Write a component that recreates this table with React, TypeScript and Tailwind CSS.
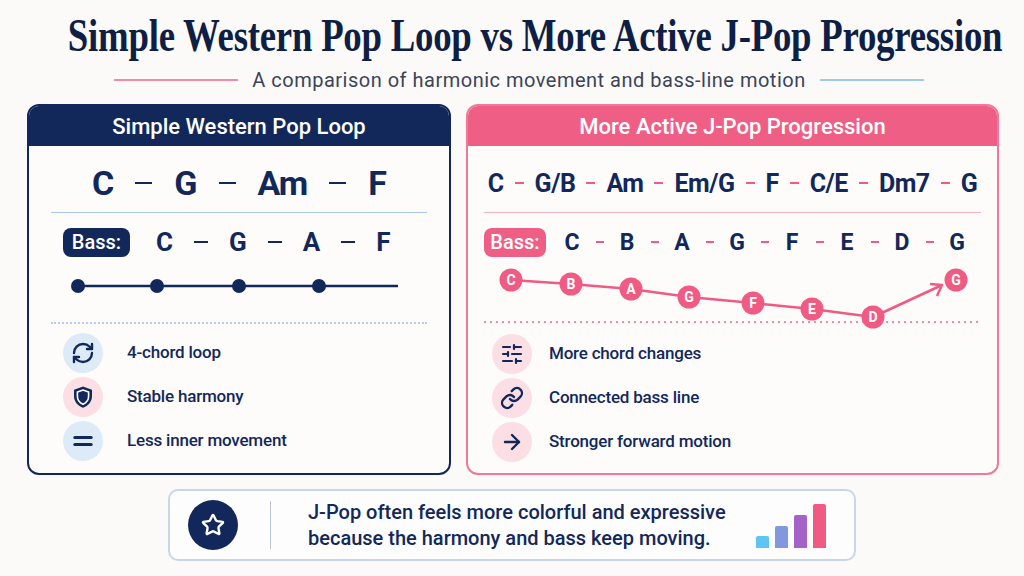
import React from "react";
import { RefreshCw, Equal, SlidersHorizontal, Link, ArrowRight, Star } from "lucide-react";

const body = "font-['Roboto','Liberation_Sans',sans-serif]";

const ShieldIcon = () => (
  <svg width="22" height="24" viewBox="0 0 22 24">
    <path d="M11 1.5 L20 4.8 V11 C20 17 16 20.8 11 22.8 C6 20.8 2 17 2 11 V4.8 Z" fill="#13285a" />
    <path d="M11 5 L16.6 7.1 V11.3 C16.6 15.2 14.2 17.9 11 19.3 C7.8 17.9 5.4 15.2 5.4 11.3 V7.1 Z" fill="none" stroke="#ffffff" strokeWidth="1.6" />
  </svg>
);

const leftFeatures = [
  { icon: <RefreshCw className="w-6 h-6" strokeWidth={2.4} />, bg: "bg-[#dcebf7]", label: "4-chord loop" },
  { icon: <ShieldIcon />, bg: "bg-[#fbdfe4]", label: "Stable harmony" },
  { icon: <Equal className="w-7 h-7" strokeWidth={2.6} />, bg: "bg-[#dcebf7]", label: "Less inner movement" },
];

const rightFeatures = [
  { icon: <SlidersHorizontal className="w-6 h-6" strokeWidth={2.2} />, label: "More chord changes" },
  { icon: <Link className="w-6 h-6" strokeWidth={2.4} />, label: "Connected bass line" },
  { icon: <ArrowRight className="w-6 h-6" strokeWidth={2.4} />, label: "Stronger forward motion" },
];

const jChords = ["C", "G/B", "Am", "Em/G", "F", "C/E", "Dm7", "G"];
const jBass = ["C", "B", "A", "G", "F", "E", "D", "G"];

// bass-line nodes, coords inside the right panel chart
const nodes = [
  { n: "C", x: 43, y: 9 },
  { n: "B", x: 103, y: 13 },
  { n: "A", x: 163, y: 18 },
  { n: "G", x: 221, y: 26 },
  { n: "F", x: 285, y: 32 },
  { n: "E", x: 344, y: 38 },
  { n: "D", x: 405, y: 46 },
  { n: "G", x: 488, y: 9 },
];

const Dash: React.FC<{ pink?: boolean; w?: string }> = ({ pink, w = "w-[15px]" }) => (
  <span className={`${w} h-[2.5px] ${pink ? "bg-[#ef5b83]" : "bg-[#13285a]"} inline-block`} />
);

const App: React.FC = () => {
  return (
    <div className={`w-[1024px] h-[576px] bg-[#fbfaf8] flex flex-col items-center overflow-hidden text-[#13285a] ${body}`}>
      {/* title */}
      <h1 className="mt-[10px] h-[52px] flex items-center justify-center w-full pl-[46px]">
        <span className="inline-block scale-x-[0.8] font-['Liberation_Serif',serif] font-bold text-[46px] leading-none whitespace-nowrap text-[#0f1e44] tracking-[-0.3px]">
          Simple Western Pop Loop vs More Active J-Pop Progression
        </span>
      </h1>
      <div className="mt-[6px] flex items-center gap-[14px] h-[24px] pl-[14px]">
        <span className="w-[124px] h-[2px] bg-[#f28ca6]" />
        <span className="text-[20px] tracking-[0.5px] text-[#3c4459] whitespace-nowrap">A comparison of harmonic movement and bass-line motion</span>
        <span className="w-[104px] h-[2px] bg-[#9ccbee]" />
      </div>

      {/* panels */}
      <div className="mt-[12px] flex gap-[15px] pl-[2px]">
        {/* left */}
        <div className="w-[424px] h-[371px] border-2 border-[#13285a] rounded-[12px] overflow-hidden flex flex-col bg-[#fdfcfb]">
          <div className="h-[40px] bg-[#13285a] text-white flex items-center justify-center text-[22px] font-medium">
            Simple Western Pop Loop
          </div>
          <div className="h-[66px] pt-[8px] flex items-center justify-center gap-[22px] text-[34px] tracking-[-1px] font-bold leading-none">
            <span>C</span>
            <Dash w="w-[17px]" />
            <span>G</span>
            <Dash w="w-[17px]" />
            <span>Am</span>
            <Dash w="w-[17px]" />
            <span>F</span>
          </div>
          <div className="mx-[22px] h-px bg-[#a9c6ec]" />
          <div className="h-[58px] flex items-center pl-[34px] gap-[21px] text-[26px] font-bold leading-none">
            <span className="w-[67px] h-[29px] rounded-[8px] bg-[#13285a] text-white text-[20px] font-medium flex items-center justify-center mr-[5px]">
              Bass:
            </span>
            <span>C</span>
            <Dash w="w-[14px]" />
            <span>G</span>
            <Dash w="w-[14px]" />
            <span>A</span>
            <Dash w="w-[14px]" />
            <span>F</span>
          </div>
          <svg width="420" height="30" viewBox="0 0 420 30" className="shrink-0">
            <line x1="49" y1="15" x2="369" y2="15" stroke="#13285a" strokeWidth="2.5" />
            {[49, 128, 210, 290].map((x) => (
              <circle key={x} cx={x} cy="15" r="7" fill="#13285a" />
            ))}
          </svg>
          <div className="mt-[21px] mx-[22px] border-t-2 border-dotted border-[#b5cdee]" />
          <div className="mt-[9px] flex flex-col gap-[4px] pl-[34px]">
            {leftFeatures.map((f) => (
              <div key={f.label} className="h-[40px] flex items-center gap-[24px]">
                <span className={`w-[40px] h-[40px] rounded-full ${f.bg} flex items-center justify-center text-[#13285a]`}>
                  {f.icon}
                </span>
                <span className="text-[17px] tracking-[-0.2px] font-medium">{f.label}</span>
              </div>
            ))}
          </div>
        </div>

        {/* right */}
        <div className="w-[533px] h-[371px] border-2 border-[#f07898] rounded-[12px] overflow-hidden flex flex-col bg-[#fdfcfb]">
          <div className="h-[40px] bg-[#ef5f85] text-white flex items-center justify-center text-[22px] font-medium">
            More Active J-Pop Progression
          </div>
          <div className="h-[66px] pt-[8px] flex items-center justify-center gap-[11px] text-[25px] tracking-[-0.5px] font-bold leading-none">
            {jChords.map((c, i) => (
              <React.Fragment key={i}>
                {i > 0 && <Dash pink w="w-[9px]" />}
                <span>{c}</span>
              </React.Fragment>
            ))}
          </div>
          <div className="mx-[16px] h-px bg-[#f6b3c4]" />
          <div className="h-[58px] flex items-center pl-[16px] text-[23px] font-bold leading-none">
            <span className="w-[62px] h-[29px] rounded-[8px] bg-[#ef5f85] text-white text-[20px] font-medium flex items-center justify-center mr-[17px]">
              Bass:
            </span>
            <div className="flex items-center gap-[14.5px]">
              {jBass.map((b, i) => (
                <React.Fragment key={i}>
                  {i > 0 && <Dash pink w="w-[8px]" />}
                  <span className="w-[18px] text-center">{b}</span>
                </React.Fragment>
              ))}
            </div>
          </div>
          <svg width="529" height="61" viewBox="0 0 529 61" className="shrink-0 overflow-visible">
            <line x1="16" y1="51" x2="512" y2="51" stroke="#f48aa5" strokeWidth="2" strokeDasharray="2 4" />
            <polyline
              points={nodes.slice(0, 7).map((p) => `${p.x},${p.y}`).join(" ")}
              fill="none"
              stroke="#ef5b83"
              strokeWidth="2.5"
            />
            <line x1="405" y1="46" x2="472" y2="15" stroke="#ef5b83" strokeWidth="2.5" />
            <polyline points="462,13 474,14 469,25" fill="none" stroke="#ef5b83" strokeWidth="2.5" strokeLinejoin="round" />
            {nodes.map((p, i) => (
              <g key={i}>
                <circle cx={p.x} cy={p.y} r="11.5" fill="#ef5b83" />
                <text
                  x={p.x}
                  y={p.y + 5}
                  textAnchor="middle"
                  fill="#ffffff"
                  fontSize="14"
                  fontWeight="700"
                  fontFamily="Roboto, 'Liberation Sans', sans-serif"
                >
                  {p.n}
                </text>
              </g>
            ))}
          </svg>
          <div className="mt-[2px] flex flex-col gap-[4px] pl-[24px]">
            {rightFeatures.map((f) => (
              <div key={f.label} className="h-[40px] flex items-center gap-[17px]">
                <span className="w-[40px] h-[40px] rounded-full bg-[#fbdfe4] flex items-center justify-center text-[#13285a]">
                  {f.icon}
                </span>
                <span className="text-[17px] tracking-[-0.2px] font-medium">{f.label}</span>
              </div>
            ))}
          </div>
        </div>
      </div>

      {/* bottom banner */}
      <div className="mt-[14px] w-[688px] h-[72px] border-2 border-[#c9d6ea] rounded-[10px] bg-[#fdfdfd] flex items-center pl-[18px] pr-[28px]">
        <span className="w-[50px] h-[50px] rounded-full bg-[#13285a] flex items-center justify-center">
          <Star className="w-6 h-6 text-white" strokeWidth={2.4} />
        </span>
        <span className="ml-[32px] w-px h-[48px] bg-[#b9c8de]" />
        <p className="ml-[37px] text-[20px] font-medium leading-[26px] text-[#13285a]">
          J-Pop often feels more colorful and expressive
          <br />
          because the harmony and bass keep moving.
        </p>
        <div className="ml-auto flex items-end gap-[6px] h-[45px]">
          <span className="w-[13px] h-[12px] rounded-t-[2px] bg-[#5ec4f1]" />
          <span className="w-[13px] h-[22px] rounded-t-[2px] bg-[#8197e0]" />
          <span className="w-[13px] h-[33px] rounded-t-[2px] bg-[#a463c6]" />
          <span className="w-[13px] h-[44px] rounded-t-[2px] bg-[#ef5b83]" />
        </div>
      </div>
    </div>
  );
};

export default App;
